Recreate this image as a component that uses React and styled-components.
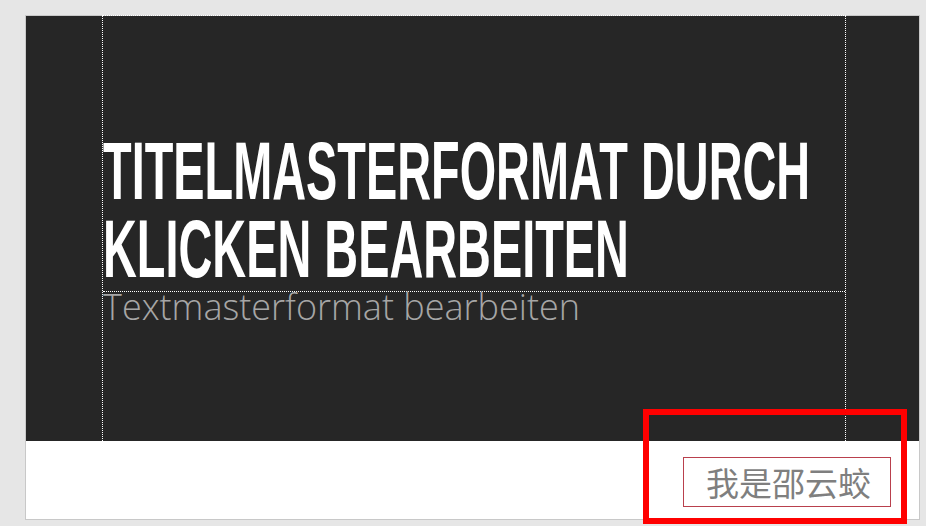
import React, { useLayoutEffect, useRef, useState } from "react";
import styled, { createGlobalStyle } from "styled-components";

const Global = createGlobalStyle`
  html, body { margin: 0; padding: 0; background: #e6e6e6; }
  body { width: 926px; height: 526px; overflow: hidden; }
`;

const Page = styled.div`
  width: 926px;
  height: 526px;
  box-sizing: border-box;
  padding: 15px 0 0 25px;
  background: #e6e6e6;
`;

const Slide = styled.div`
  position: relative;
  width: 895px;
  height: 505px;
  box-sizing: border-box;
  border: 1px solid #c8c8c8;
  display: flex;
  flex-direction: column;
  background: #ffffff;
`;

const Stage = styled.div`
  height: 425px;
  flex: none;
  background: #262626;
  display: flex;
`;

const Frame = styled.div`
  margin: -1px 0 0 76px;
  width: 744px;
  height: 426px;
  box-sizing: border-box;
  border-top: 1px dotted #ffffff;
  border-left: 1px dotted #ffffff;
  border-right: 1px dotted #ffffff;
  display: flex;
  flex-direction: column;
`;

const TitleBox = styled.div`
  height: 276px;
  flex: none;
  box-sizing: border-box;
  border-bottom: 1px dotted #ffffff;
  display: flex;
  flex-direction: column;
  justify-content: flex-end;
  padding-bottom: 3px;
`;

const TitleLine = styled.div`
  font-family: "Liberation Sans Narrow", "Liberation Sans", sans-serif;
  font-weight: 700;
  font-size: 81px;
  line-height: 78px;
  color: #ffffff;
  white-space: nowrap;
  transform-origin: 0 50%;
  width: max-content;
`;

const SubTitle = styled.div`
  font-family: "Open Sans", sans-serif;
  font-weight: 300;
  font-size: 36px;
  line-height: 25px;
  color: #a6a6a6;
  white-space: nowrap;
  padding-top: 2px;
`;

const Footer = styled.div`
  flex: 1;
  display: flex;
  justify-content: flex-end;
  align-items: flex-start;
  padding: 16px 28px 0 0;
`;

const NameBox = styled.div`
  width: 208px;
  height: 50px;
  box-sizing: border-box;
  border: 1.5px solid #b9404d;
  display: flex;
  align-items: center;
  padding-left: 22px;
  font-family: "Noto Sans CJK SC", sans-serif;
  font-size: 33px;
  color: #7f7f7f;
  line-height: 1;
`;

const Highlight = styled.div`
  position: absolute;
  left: 617px;
  top: 393px;
  width: 264px;
  height: 115px;
  box-sizing: border-box;
  border: 6px solid #ff0000;
  pointer-events: none;
`;

const TITLE_WIDTH = 707;

export default function App() {
  const l1 = useRef(null);
  const [scale, setScale] = useState(0.62);

  useLayoutEffect(() => {
    if (l1.current) {
      const w = l1.current.offsetWidth;
      if (w > 0) setScale(TITLE_WIDTH / w);
    }
  }, []);

  const t = { transform: `scaleX(${scale})` };

  return (
    <>
      <Global />
      <Page>
        <Slide>
          <Stage>
            <Frame>
              <TitleBox>
                <TitleLine ref={l1} style={t}>TITELMASTERFORMAT DURCH</TitleLine>
                <TitleLine style={t}>KLICKEN BEARBEITEN</TitleLine>
              </TitleBox>
              <SubTitle>Textmasterformat bearbeiten</SubTitle>
            </Frame>
          </Stage>
          <Footer>
            <NameBox>我是邵云蛟</NameBox>
          </Footer>
          <Highlight />
        </Slide>
      </Page>
    </>
  );
}
